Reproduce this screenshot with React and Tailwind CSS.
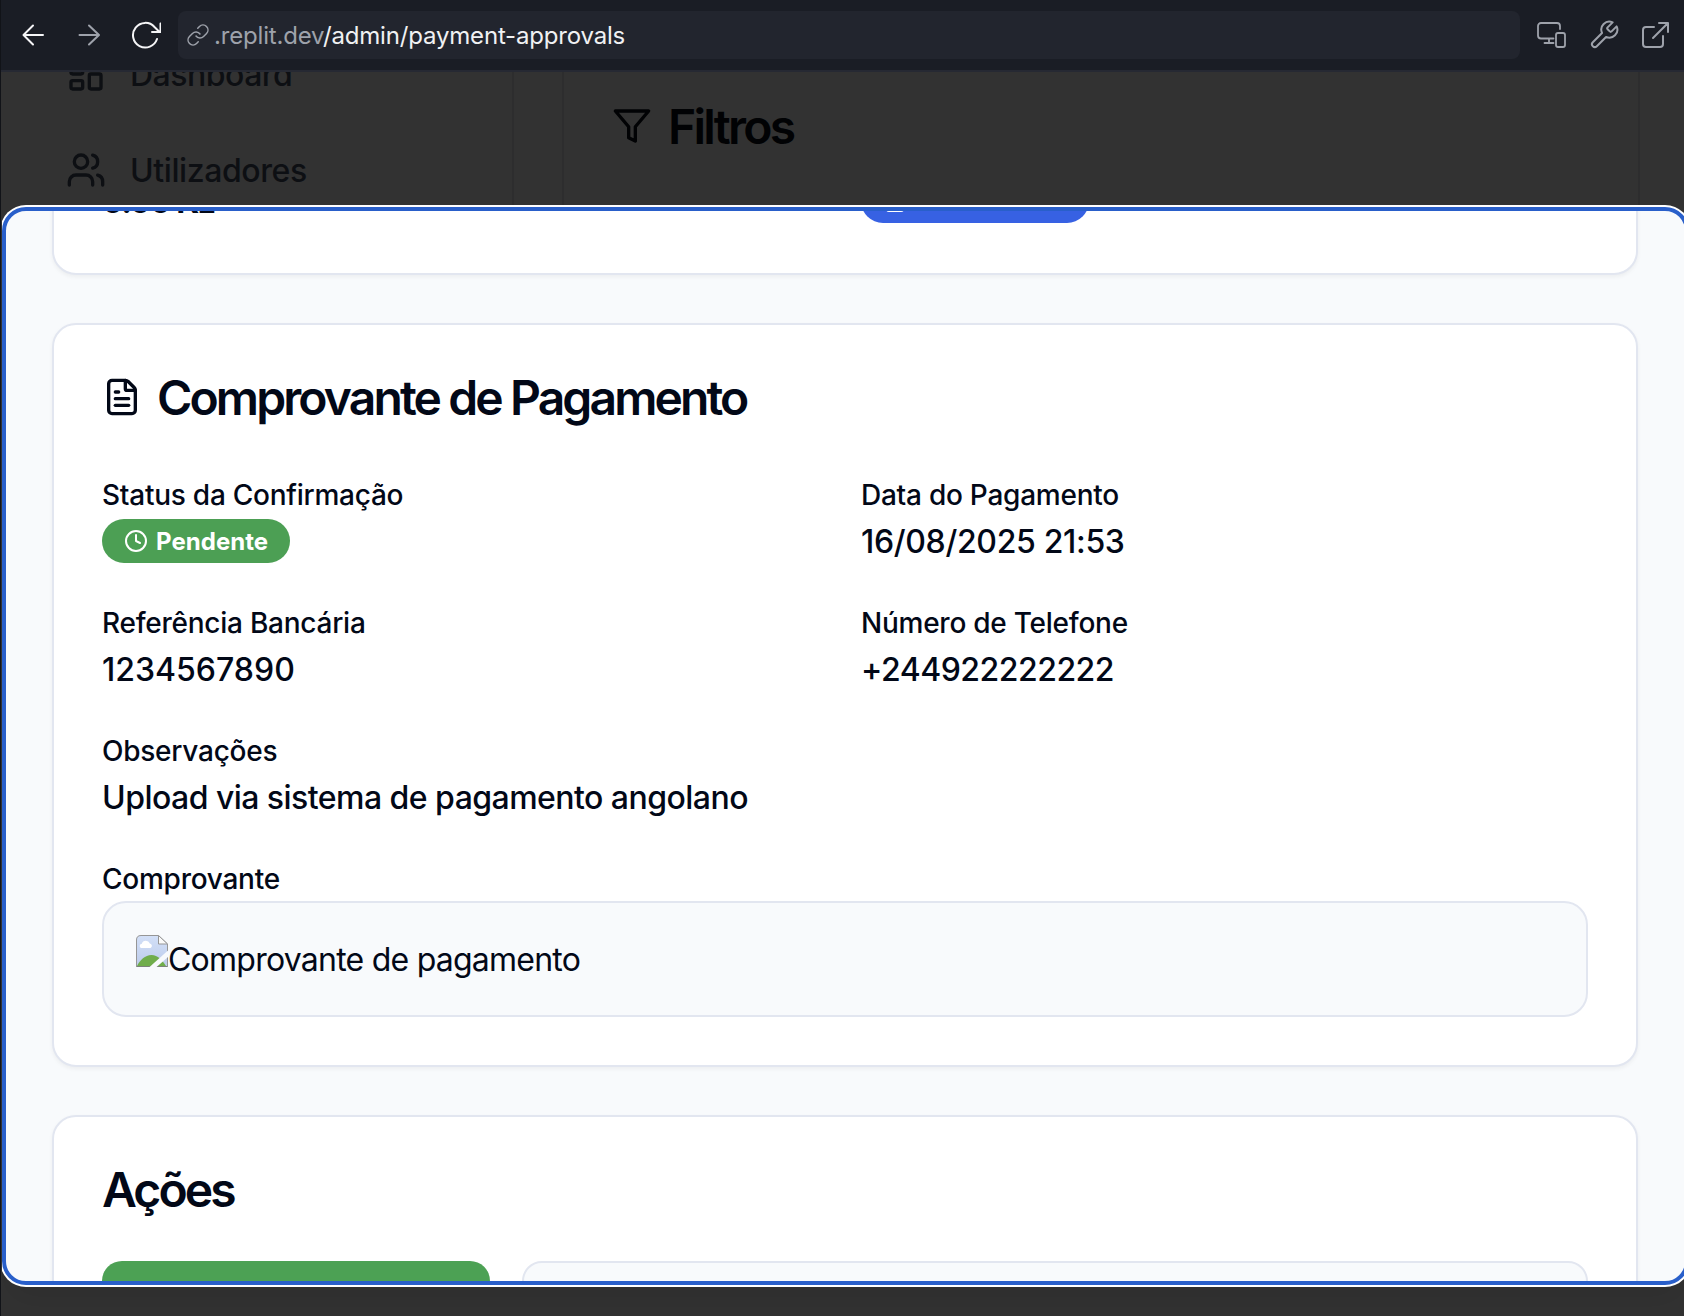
import React from "react";
import { FileText, Clock, LayoutDashboard, Users, File } from "lucide-react";

const stroke = { fill: "none", stroke: "currentColor", strokeLinecap: "round", strokeLinejoin: "round" };

function Toolbar() {
  return (
    <header className="flex h-[72px] shrink-0 items-center border-b-2 border-[#262933] bg-[#1a1d25] pr-[13px] pl-4">
      <svg className="size-8 shrink-0 text-[#f5f5f7]" viewBox="0 0 32 32" strokeWidth="2" {...stroke}>
        <path d="M26 16H7M16 6.5L6.500 16L16 25.5" />
      </svg>
      <svg className="ml-6 size-8 shrink-0 text-[#9ea2ab]" viewBox="0 0 32 32" strokeWidth="2" {...stroke}>
        <path d="M6.500 16H25.500M16 6.5L26 16L16 25.5" />
      </svg>
      <svg className="ml-6 size-8 shrink-0 text-[#f5f5f7]" viewBox="0 0 32 32" strokeWidth="2" {...stroke}>
        <path d="M28 20A12.300 12.300 0 1 1 25.500 8L30 12.500M31.500 4.500V13H23" />
      </svg>
      <div className="ml-[17px] flex h-12 flex-1 items-center rounded-lg bg-[#22252e] pl-2">
        <svg className="size-6 shrink-0 text-[#9ea2ab]" viewBox="0 0 24 24" strokeWidth="1.5" {...stroke}>
          <path d="M10 13a5 5 0 0 0 7.540.540l3-3a5 5 0 0 0-7.070-7.070l-1.720 1.710" />
          <path d="M14 11a5 5 0 0 0-7.540-.540l-3 3a5 5 0 0 0 7.070 7.070l1.710-1.710" />
        </svg>
        <span className="ml-1 pt-0.5 text-[24px] leading-8 tracking-[-0.18px] whitespace-nowrap text-[#f0f1f3]">
          <span className="text-[#9ea2ab]">.replit.dev</span>/admin/payment-approvals
        </span>
      </div>
      <svg className="ml-4 size-8 shrink-0 text-[#9ea2ab]" viewBox="0 0 32 32" strokeWidth="1.800" {...stroke}>
        <path d="M24 10V7a3 3 0 0 0-3-3H5a3 3 0 0 0-3 3v9.500a3 3 0 0 0 3 3h12.500M13 20v4M8.500 24h9" />
        <rect x="20" y="14" width="9" height="14" rx="2" />
      </svg>
      <svg className="ml-5 size-8 shrink-0 text-[#9ea2ab]" viewBox="0 0 24 24" strokeWidth="1.500" {...stroke}>
        <path d="M14.700 6.300a1 1 0 0 0 0 1.400l1.600 1.600a1 1 0 0 0 1.400 0l3.770-3.770a6 6 0 0 1-7.940 7.940l-6.910 6.910a2.120 2.120 0 0 1-3-3l6.910-6.910a6 6 0 0 1 7.940-7.940l-3.760 3.760z" />
      </svg>
      <svg className="ml-[19px] size-8 shrink-0 text-[#9ea2ab]" viewBox="0 0 32 32" strokeWidth="2" {...stroke}>
        <path d="M15 8H7a3 3 0 0 0-3 3v14a3 3 0 0 0 3 3h14a3 3 0 0 0 3-3v-8M20 4h9v9M29 4L14 19" />
      </svg>
    </header>
  );
}

function Backdrop() {
  return (
    <div className="flex h-[1244px] items-start overflow-hidden bg-[#323232]">
      <nav className="flex h-[1180px] w-[513px] flex-col gap-12 border-r-2 border-[#2d2d2e] pl-[65px] text-[32px] leading-[48px] font-medium tracking-[-0.5px] text-[#0d0f13]">
        <div className="-mt-[22px] flex h-12 shrink-0 items-center gap-6">
          <LayoutDashboard size={40} />
          <span className="pt-px">Dashboard</span>
        </div>
        <div className="flex h-12 shrink-0 items-center gap-6">
          <Users size={40} />
          <span className="pt-px tracking-[-0.42px]">Utilizadores</span>
        </div>
      </nav>
      <section className="ml-12 h-[1180px] w-[1078px] border-x-2 border-[#2d2d2e] pt-[30px] pl-12 text-[#010204]">
        <h2 className="flex h-12 items-center gap-4 text-[48px] leading-[48px] font-semibold tracking-[-2.75px]">
          <svg className="size-10" viewBox="0 0 24 24" strokeWidth="2" {...stroke}>
            <polygon points="22 3 2 3 10 12.460 10 19 14 21 14 12.460 22 3" />
          </svg>
          <span className="pt-px">Filtros</span>
        </h2>
      </section>
    </div>
  );
}

function Card({ className = "", children }) {
  return (
    <section className={"w-[1586px] shrink-0 rounded-3xl border-2 border-[#e2e6f0] bg-white p-12 shadow-[0_2px_4px_rgba(0,0,0,0.05)] " + className}>
      {children}
    </section>
  );
}

function Title({ children, icon }) {
  return (
    <h2 className="flex h-12 items-center gap-[15px] text-[48px] leading-[48px] font-semibold tracking-[-2.88px]">
      {icon}
      <span className="pt-px">{children}</span>
    </h2>
  );
}

function Label({ children }) {
  return <div className="h-12 text-[28px] leading-[52px] font-medium tracking-[-0.25px]">{children}</div>;
}

function Field({ label, value, children, className = "", valueClass = "" }) {
  return (
    <div className={className}>
      <Label>{label}</Label>
      <div className="flex h-12 items-center text-[32px] leading-[48px] font-medium">
        {value ? <span className={"pt-px " + valueClass}>{value}</span> : children}
      </div>
    </div>
  );
}

function BrokenImage() {
  return (
    <svg className="size-8 shrink-0" viewBox="0 0 32 32">
      <defs>
        <linearGradient id="sky" x1="0" y1="0" x2="0" y2="1">
          <stop offset="0" stopColor="#d3e0f8" />
          <stop offset="1" stopColor="#bccbea" />
        </linearGradient>
      </defs>
      <path d="M5 .5H22.500L31.500 9V31.500H.5V5Q.5.5 5 .5Z" fill="url(#sky)" stroke="#969696" />
      <path d="M22.500.5V9H31.500Z" fill="#fafafa" stroke="#969696" />
      <path d="M5 13a2.200 2.200 0 0 1 .8-4.200a4.200 4.200 0 0 1 8-.4a2.400 2.400 0 0 1 .6 4.600Z" fill="#fff" />
      <path d="M1 31C4 25 9 20 15.500 20S26 25 30 31Z" fill="#70ad4b" />
      <path d="M.5 31.500H31.500" stroke="#7c8379" />
      <path d="M13 32.500L32.500 15V21.500L20 32.500Z" fill="#f8fafc" />
    </svg>
  );
}

export default function App() {
  return (
    <div className="relative h-[1316px] w-[1684px] overflow-hidden border-l border-[#111318] font-['Inter','Liberation_Sans',sans-serif]">
      <Toolbar />
      <Backdrop />
      <div className="absolute top-[72px] right-0 bottom-0 left-px overflow-hidden pt-[135px]">
        <div
          role="dialog"
          className="h-[1078px] w-[1687px] overflow-hidden rounded-[24px] border-4 border-[#295fca] bg-[#f8fafc] text-[#020817] shadow-[0_0_0_2px_#fff,0_20px_30px_-6px_rgba(0,0,0,0.08)]"
        >
          <div className="-mt-[200px] flex flex-col gap-12 pl-[46px]">
            <Card className="flex h-[264px] items-end">
              <div className="grid w-full grid-cols-2 gap-8">
                <span className="h-12 pt-px text-[32px] leading-[48px] font-bold tracking-[-1.4px]">0.00 Kz</span>
                <div className="flex h-12 items-center">
                  <span className="flex h-11 w-[228px] items-center rounded-full bg-[#3761e3] pl-[22px] text-white">
                    <File size={24} />
                  </span>
                </div>
              </div>
            </Card>
            <Card className="h-[744px]">
              <Title icon={<FileText size={40} />}>Comprovante de Pagamento</Title>
              <div className="mt-12 grid grid-cols-2 gap-8">
                <Field label="Status da Confirmação">
                  <span className="flex h-11 items-center gap-2 rounded-full bg-[#4c9f54] px-[22px] text-[24px] leading-8 font-bold text-white">
                    <Clock size={24} />
                    <span className="pt-0.5 tracking-[0.05px]">Pendente</span>
                  </span>
                </Field>
                <Field label="Data do Pagamento" value="16/08/2025 21:53" valueClass="tracking-[-0.33px]" />
                <Field label="Referência Bancária" value="1234567890" />
                <Field label="Número de Telefone" value="+244922222222" valueClass="tracking-[-0.5px]" />
                <Field
                  label="Observações"
                  value="Upload via sistema de pagamento angolano"
                  className="col-span-2"
                  valueClass="tracking-[-0.54px]"
                />
                <div className="col-span-2">
                  <Label>Comprovante</Label>
                  <div className="flex h-[116px] rounded-3xl border-2 border-[#e2e6f0] bg-[#f8fafc] p-8">
                    <BrokenImage />
                    <span className="text-[32px] leading-[50px] tracking-[-0.76px]">Comprovante de pagamento</span>
                  </div>
                </div>
              </div>
            </Card>
            <Card className="h-[400px]">
              <Title>Ações</Title>
              <div className="mt-12 flex gap-8">
                <div className="h-20 w-[388px] rounded-[20px] bg-[#4ca154]" />
                <div className="h-20 flex-1 rounded-[20px] border-2 border-[#e2e6f0] bg-[#f8fafc]" />
              </div>
            </Card>
          </div>
        </div>
      </div>
    </div>
  );
}
